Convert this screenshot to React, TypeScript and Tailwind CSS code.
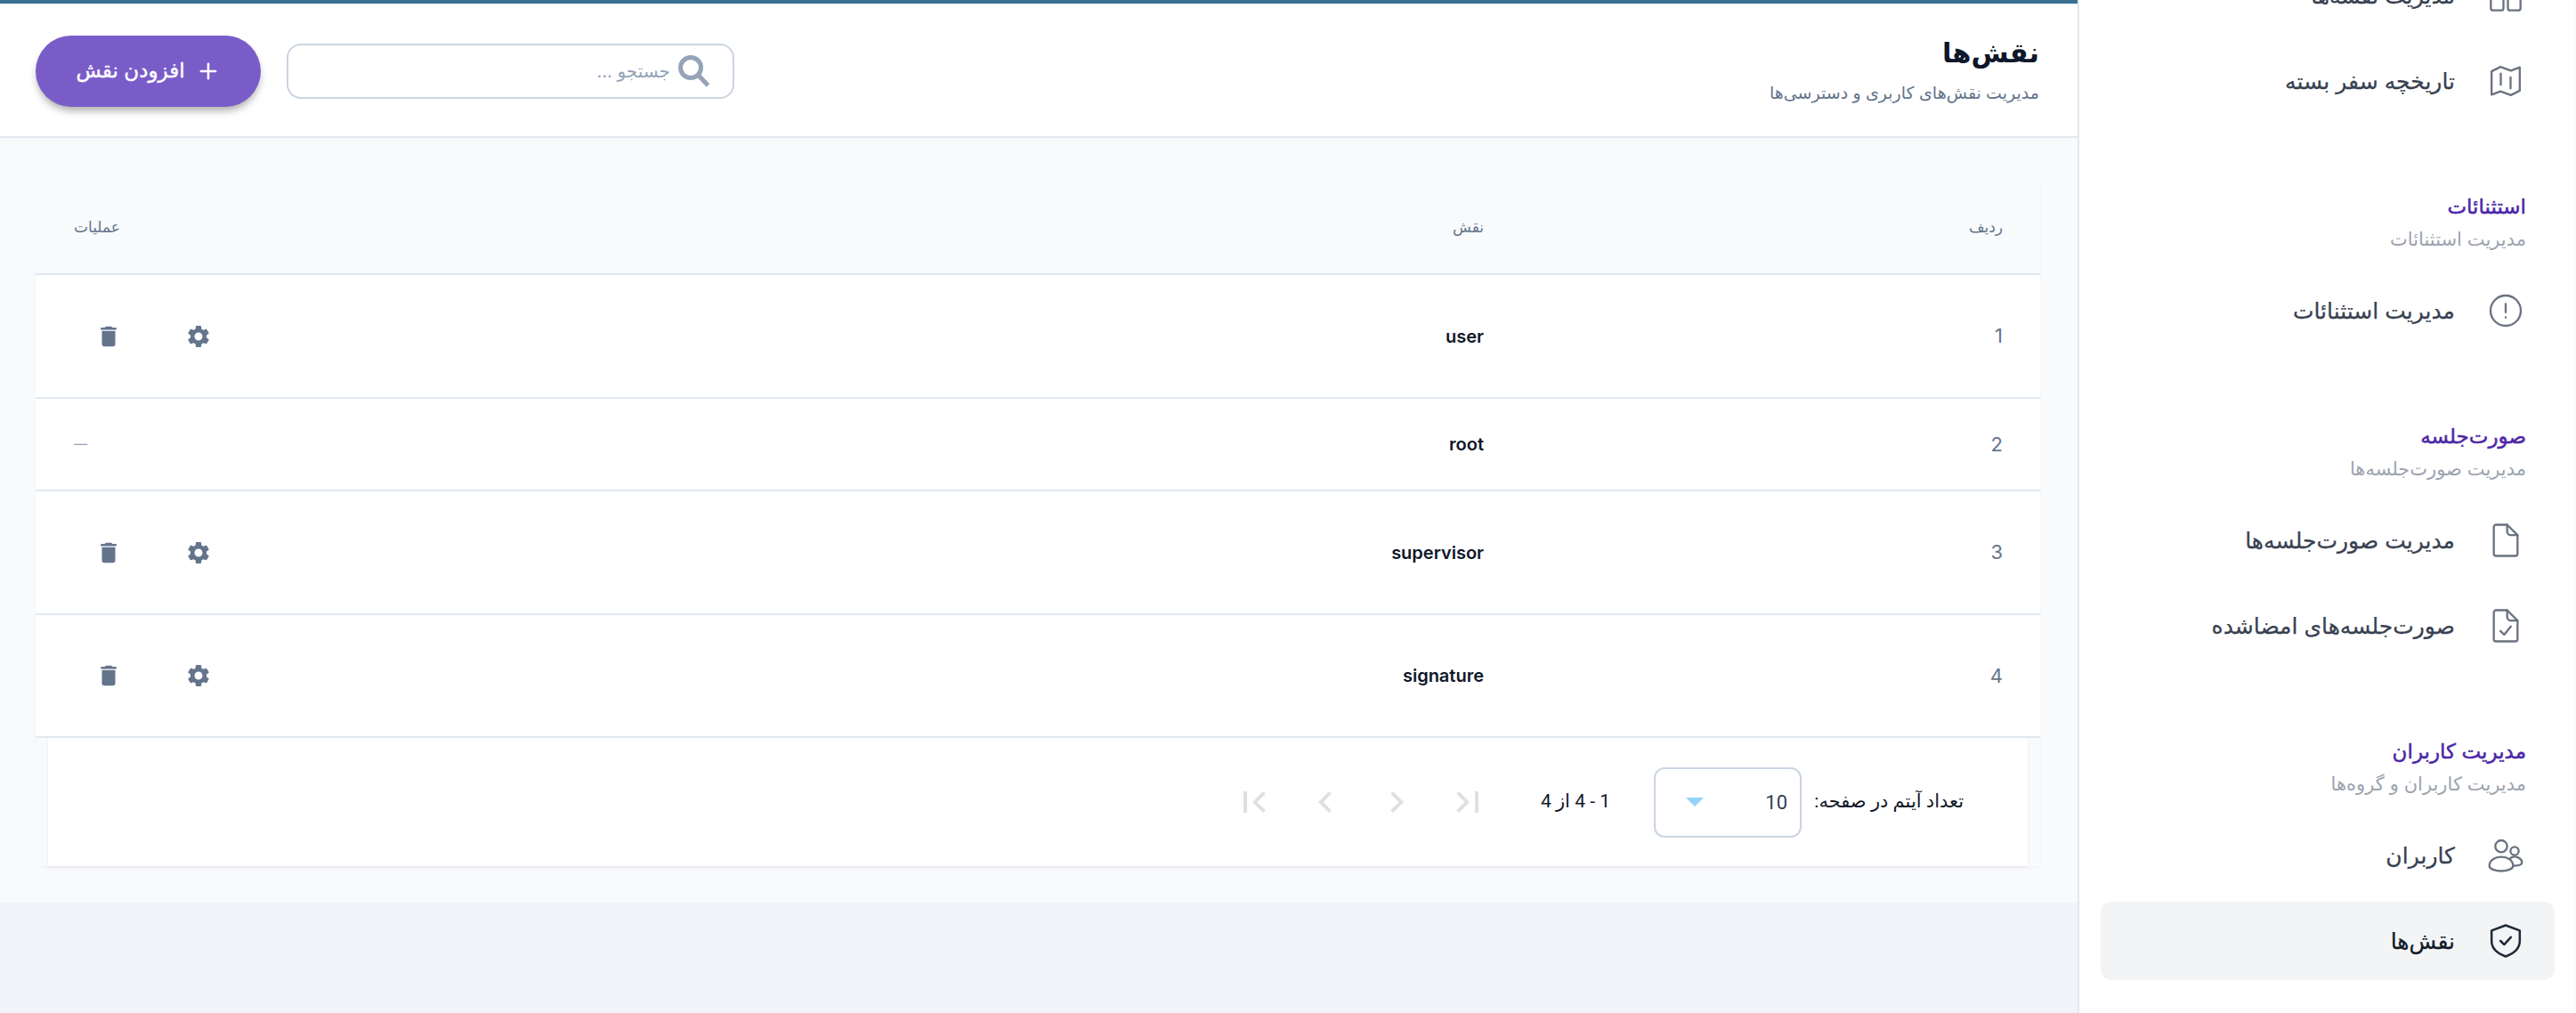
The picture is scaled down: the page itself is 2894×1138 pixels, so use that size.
import { MdChevronLeft, MdChevronRight, MdDelete, MdFirstPage, MdLastPage, MdSettings } from "react-icons/md";
import { Plus } from "lucide-react";

function SearchIcon() {
  return (
    <svg viewBox="0 0 36 36" fill="none" stroke="currentColor" strokeWidth="5" className="w-9 h-9 shrink-0 text-[#94a3b8]">
      <circle cx="14" cy="14" r="11.5" />
      <path d="M22 22 33.5 34" />
    </svg>
  );
}

function MapIcon() {
  return (
    <svg viewBox="0 0 24 24" fill="none" stroke="currentColor" strokeWidth="1.4" strokeLinejoin="round" strokeLinecap="round" className="w-10 h-10">
      <path d="M2.5 5.5 8.5 2.5 15.5 5 21.5 2.8V18.5L15.5 21.5 8.5 19 2.5 21.2Z" />
      <path d="M8.7 7V14.5M15.3 9.5V17" />
    </svg>
  );
}

function AlertIcon() {
  return (
    <svg viewBox="0 0 24 24" fill="none" stroke="currentColor" strokeWidth="1.4" strokeLinecap="round" className="w-10 h-10">
      <circle cx="12" cy="12" r="10.2" />
      <path d="M12 7.5V13M12 16.4V16.6" />
    </svg>
  );
}

function FileIcon() {
  return (
    <svg viewBox="0 0 24 24" fill="none" stroke="currentColor" strokeWidth="1.4" strokeLinejoin="round" strokeLinecap="round" className="w-10 h-10">
      <path d="M5.5 1.5H13L20 8.5V21A1.5 1.5 0 0 1 18.5 22.5H5.5A1.5 1.5 0 0 1 4 21V3A1.5 1.5 0 0 1 5.5 1.5Z" />
      <path d="M13 1.5V6A2.5 2.5 0 0 0 15.5 8.5H20" />
    </svg>
  );
}

function FileCheckIcon() {
  return (
    <svg viewBox="0 0 24 24" fill="none" stroke="currentColor" strokeWidth="1.4" strokeLinejoin="round" strokeLinecap="round" className="w-10 h-10">
      <path d="M5.5 1.5H13L20 8.5V21A1.5 1.5 0 0 1 18.5 22.5H5.5A1.5 1.5 0 0 1 4 21V3A1.5 1.5 0 0 1 5.5 1.5Z" />
      <path d="M13 1.5V6A2.5 2.5 0 0 0 15.5 8.5H20" />
      <path d="M8.5 15.5 11 18 15.5 12.5" />
    </svg>
  );
}

function UsersIcon() {
  return (
    <svg viewBox="0 0 24 24" fill="none" stroke="currentColor" strokeWidth="1.4" strokeLinejoin="round" strokeLinecap="round" className="w-10 h-10">
      <circle cx="9" cy="5.8" r="4" />
      <circle cx="18" cy="9" r="2.8" />
      <path d="M1 19C1 15 5 13 9 13S17 15 17 19C17 21 13 22.5 9 22.5S1 21 1 19Z" />
      <path d="M15 14C16 13 17 12.8 18 12.8 20.5 12.8 23 14.5 23 16.8 23 18.2 20.5 19 17 19" />
    </svg>
  );
}

function ShieldIcon() {
  return (
    <svg viewBox="0 0 24 24" fill="none" stroke="currentColor" strokeWidth="1.5" strokeLinejoin="round" strokeLinecap="round" className="w-10 h-10">
      <path d="M12 1.5 21.5 5V12C21.5 17 17.5 20.5 12 22.5 6.5 20.5 2.5 17 2.5 12V5Z" />
      <path d="M8.5 12 11 14.5 15.5 9.5" />
    </svg>
  );
}

function BoardIcon() {
  return (
    <svg viewBox="0 0 24 24" fill="none" stroke="currentColor" strokeWidth="1.4" strokeLinejoin="round" className="w-10 h-10">
      <rect x="2" y="-6" width="8.5" height="16" rx="1.5" />
      <rect x="13.5" y="-6" width="8.5" height="8" rx="1.5" />
      <rect x="2" y="14" width="8.5" height="8" rx="1.5" />
      <rect x="13.5" y="6" width="8.5" height="16" rx="1.5" />
    </svg>
  );
}

function NavItem({ icon, label, active }: { icon: React.ReactNode; label: string; active?: boolean }) {
  return (
    <div
      className={
        active
          ? "h-[88px] mb-2 flex items-center gap-[37px] pr-[35px] rounded-xl bg-[#f3f4f6] text-[#111827]"
          : "h-[88px] mb-2 flex items-center gap-[37px] pr-[35px] rounded-xl text-[#374151]"
      }
    >
      <span className={active ? "text-[#1f2937]" : "text-[#6b7280]"}>{icon}</span>
      <span className="text-[25px] leading-10 [-webkit-text-stroke:0.25px_currentColor]">{label}</span>
    </div>
  );
}

function NavHeading({ title, sub }: { title: string; sub: string }) {
  return (
    <div className="pr-8 mt-[77px] mb-5">
      <div className="text-[23px] leading-10 text-[#4c28a8] [-webkit-text-stroke:0.5px_currentColor]">{title}</div>
      <div className="text-[21px] leading-8 mt-[1px] text-[#9ca3af]">{sub}</div>
    </div>
  );
}

const rows = [
  { id: 1, name: "user", actions: true, h: "h-[139px]" },
  { id: 2, name: "root", actions: false, h: "h-[104px]" },
  { id: 3, name: "supervisor", actions: true, h: "h-[139px]" },
  { id: 4, name: "signature", actions: true, h: "h-[138px]" },
];

export default function App() {
  return (
    <div dir="rtl" className="font-['Inter','DejaVu_Sans',sans-serif] flex h-[1138px] w-[2894px] overflow-hidden bg-white">
      <aside className="w-[560px] shrink-0 border-l-2 border-r-2 border-l-[#e2e8f0] border-r-[#f8fafc] bg-white overflow-hidden">
        <nav className="pr-[22px] pl-6 -mt-[49px]">
          <NavItem icon={<BoardIcon />} label="مدیریت نقشه‌ها" />
          <NavItem icon={<MapIcon />} label="تاریخچه سفر بسته" />
          <NavHeading title="استثنائات" sub="مدیریت استثنائات" />
          <NavItem icon={<AlertIcon />} label="مدیریت استثنائات" />
          <NavHeading title="صورت‌جلسه" sub="مدیریت صورت‌جلسه‌ها" />
          <NavItem icon={<FileIcon />} label="مدیریت صورت‌جلسه‌ها" />
          <NavItem icon={<FileCheckIcon />} label="صورت‌جلسه‌های امضاشده" />
          <NavHeading title="مدیریت کاربران" sub="مدیریت کاربران و گروه‌ها" />
          <NavItem icon={<UsersIcon />} label="کاربران" />
          <NavItem icon={<ShieldIcon />} label="نقش‌ها" active />
        </nav>
      </aside>

      <main className="flex-1 min-w-0 bg-[#f1f5f9] flex flex-col">
        <div className="h-1 bg-[#3b6e91]" />
        <div className="h-[2px] bg-[#f1f5f9]" />
        <header className="h-[149px] bg-white border-b-2 border-[#e2e8f0] flex items-center justify-between pr-[43px] pl-10 shrink-0">
          <div className="-mt-[2px]">
            <h1 className="text-[30.5px] leading-[44px] font-bold text-[#0f172a]">نقش‌ها</h1>
            <p className="text-[19px] leading-8 mt-2 text-[#64748b]">مدیریت نقش‌های کاربری و دسترسی‌ها</p>
          </div>
          <div className="flex items-center gap-[29px]">
            <div className="w-[503px] h-[62px] rounded-2xl border-2 border-[#cbd5e1] flex items-center pr-[25px] bg-white">
              <SearchIcon />
              <input placeholder="جستجو ..." className="flex-1 min-w-0 pr-[9px] text-[20px] outline-none placeholder:text-[#94a3b8] bg-transparent" />
            </div>
            <button className="w-[253px] h-20 rounded-full bg-[#7a5cc9] text-white text-[23px] flex items-center justify-center gap-3 shadow-[0_6px_10px_-2px_rgba(0,0,0,0.35)] [-webkit-text-stroke:0.4px_currentColor]">
              <Plus className="w-7 h-7" strokeWidth={2.2} />
              افزودن نقش
            </button>
          </div>
        </header>

        <section className="h-[859px] shrink-0 bg-[#f8fafc] pt-[50px] pr-[42px] pl-10">
          <div className="shadow-[0_1px_3px_rgba(15,23,42,0.03)]">
            <table className="w-full table-fixed border-collapse bg-white">
              <thead>
                <tr className="h-[103px] bg-[#f8fafc] border-b-2 border-[#e2e8f0] text-[17px] text-[#64748b]">
                  <th className="w-[583px] pr-[42px] text-right font-medium">ردیف</th>
                  <th className="pr-[42px] text-right font-medium">نقش</th>
                  <th className="w-[400px] pl-[43px] text-left font-medium">عملیات</th>
                </tr>
              </thead>
              <tbody>
                {rows.map((row) => (
                  <tr key={row.id} className={`${row.h} border-b-2 border-[#e2e8f0]`}>
                    <td className="pr-[42px] text-right text-[22px] text-[#64748b]">{row.id}</td>
                    <td className="pr-[42px] text-right text-[20px] font-semibold text-[#0f172a]">{row.name}</td>
                    <td className="pl-[43px]">
                      {row.actions ? (
                        <div className="flex justify-end items-center gap-[71px] pl-6 text-[#64748b]">
                          <MdSettings className="w-[30px] h-[30px]" />
                          <MdDelete className="w-[30px] h-[30px]" />
                        </div>
                      ) : (
                        <div className="text-left text-[15px] text-[#94a3b8]">—</div>
                      )}
                    </td>
                  </tr>
                ))}
              </tbody>
            </table>
            <div className="font-['Roboto','DejaVu_Sans',sans-serif] mx-[14px] h-[144px] flex items-center pr-[72px] bg-white text-[21px] text-[#111827] shadow-[0_2px_4px_rgba(15,23,42,0.06)]">
              <span className="w-[174px] whitespace-nowrap">تعداد آیتم در صفحه:</span>
              <div className="w-[166px] h-[79px] mr-2 rounded-xl border-2 border-[#cbd5e1] flex items-center justify-between pr-[14px] pl-[34px] text-[22px] text-[#334155]">
                <span>10</span>
                <span className="w-0 h-0 border-x-[10px] border-x-transparent border-t-[10px] border-t-[#93d3fb]" />
              </div>
              <span className="mr-[49px] w-[71px] whitespace-nowrap">1 - 4 از 4</span>
              <div className="flex items-center mr-[49px] text-[#e0e0e0]">
                <span className="w-20 flex justify-center"><MdLastPage className="w-12 h-12" /></span>
                <span className="w-20 flex justify-center"><MdChevronRight className="w-12 h-12" /></span>
                <span className="w-20 flex justify-center"><MdChevronLeft className="w-12 h-12" /></span>
                <span className="w-20 flex justify-center"><MdFirstPage className="w-12 h-12" /></span>
              </div>
            </div>
          </div>
        </section>
      </main>
    </div>
  );
}
